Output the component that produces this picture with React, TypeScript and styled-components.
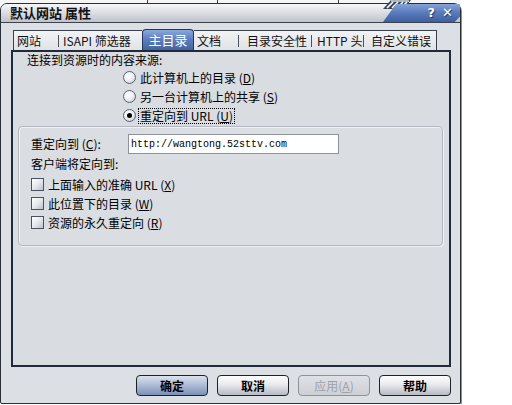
import React from 'react'
import styled, { createGlobalStyle, css } from 'styled-components'

const cjk = `"Noto Sans CJK SC", "Noto Sans", sans-serif`

const GlobalStyle = createGlobalStyle`
  html, body {
    margin: 0;
    padding: 0;
    background: #fff;
  }
  body {
    font-family: ${cjk};
    font-size: 12px;
    color: #000;
  }
`

// bits of other windows peeking above the dialog
const Backdrop = styled.div`
  width: 461px;
  height: 3px;
  background:
    linear-gradient(#3a3a3a, #3a3a3a) 147px 0 / 1px 3px no-repeat,
    linear-gradient(#3a3a3a, #3a3a3a) 217px 0 / 1px 3px no-repeat,
    linear-gradient(#3a3a3a, #3a3a3a) 338px 0 / 1px 3px no-repeat,
    #f6f6f6;
`

const Window = styled.div`
  width: 459px;
  height: 399px;
  border: 1px solid #2b2f36;
  border-radius: 7px 7px 2px 2px;
  background: #dcdfe3;
  display: flex;
  flex-direction: column;
  box-shadow: 1px 1px 0 #8a8e96;
`

const TitleBar = styled.div`
  height: 18px;
  display: flex;
  align-items: center;
  padding-left: 9px;
  border-bottom: 1px solid #3c424c;
  border-radius: 6px 6px 0 0;
  background: linear-gradient(#f7f7f9 0%, #e2e4e8 35%, #bfc3ca 100%);
`

const Title = styled.div`
  flex: 1;
  font-size: 13px;
  font-weight: bold;
  line-height: 18px;
  color: #111;
`

const Caption = styled.div`
  position: relative;
  width: 89px;
  height: 18px;
  align-self: flex-start;
`

const CaptionFill = styled.div`
  height: 18px;
  display: flex;
  align-items: center;
  justify-content: flex-end;
  gap: 7px;
  padding-right: 7px;
  box-sizing: border-box;
  background: linear-gradient(#86a3d6 0%, #5c7dbd 45%, #3e5e9f 100%);
  clip-path: polygon(12px 100%, 25px 0, 100% 0, 100% 70%, 94% 100%);
`

const CaptionGlyph = styled.span`
  color: #fff;
  font-family: "DejaVu Sans", sans-serif;
  font-weight: bold;
  font-size: 13px;
  line-height: 18px;
  text-shadow: 1px 1px 0 #2a3f6a;
`

const Stairs = styled.svg`
  position: absolute;
  left: 8px;
  top: -4px;
  overflow: visible;
`

const Body = styled.div`
  flex: 1;
  display: flex;
  flex-direction: column;
  padding: 5px 9px 7px 10px;
`

const TabRow = styled.div`
  display: flex;
  align-items: flex-end;
  height: 22px;
  margin-left: 2px;
`

const TabStrip = styled.div<{ $edge: 'left' | 'right' }>`
  display: flex;
  align-items: center;
  height: 19px;
  border-top: 1px solid #3a4250;
  background: linear-gradient(#f2f3f5, #e0e2e6);
  ${p =>
    p.$edge === 'left'
      ? css`
          border-left: 1px solid #3a4250;
        `
      : css`
          border-right: 1px solid #3a4250;
        `}
`

const Tab = styled.div<{ $w: number; $pl: number }>`
  width: ${p => p.$w}px;
  padding-left: ${p => p.$pl}px;
  box-sizing: border-box;
  white-space: nowrap;
  font-size: 12px;
  line-height: 19px;
  color: #111;
`

const Sep = styled.div`
  width: 1px;
  height: 12px;
  background: #4c525c;
`

const ActiveTab = styled.div`
  width: 52px;
  height: 21px;
  box-sizing: border-box;
  border: 1px solid #23365c;
  border-bottom: none;
  border-radius: 4px 4px 0 0;
  background: linear-gradient(#8aa8dc 0%, #5d7fc0 45%, #43639f 100%);
  color: #fff;
  font-size: 13px;
  line-height: 20px;
  text-align: center;
`

const Panel = styled.div`
  height: 313px;
  border: 2px solid #1f2b3c;
  background: #d9dce1;
  display: flex;
  flex-direction: column;
`

const Intro = styled.div`
  padding-left: 14px;
  line-height: 16px;
`

const RadioList = styled.div`
  padding-left: 110px;
  display: flex;
  flex-direction: column;
`

const OptionRow = styled.div`
  height: 19px;
  display: flex;
  align-items: center;
  gap: 3px;
  white-space: nowrap;
`

const Radio = styled.span<{ $on?: boolean }>`
  width: 13px;
  height: 13px;
  box-sizing: border-box;
  border: 1px solid #5a6272;
  border-radius: 50%;
  background: radial-gradient(circle at 40% 35%, #ffffff 0%, #eef0f3 45%, #b9bec8 100%);
  display: flex;
  align-items: center;
  justify-content: center;
  &::after {
    content: '';
    width: 5px;
    height: 5px;
    border-radius: 50%;
    background: #000;
    display: ${p => (p.$on ? 'block' : 'none')};
  }
`

const Check = styled.span`
  width: 13px;
  height: 13px;
  box-sizing: border-box;
  border: 1px solid #4a5262;
  background: linear-gradient(135deg, #ffffff 0%, #e6e8ec 50%, #bcc1ca 100%);
`

const Label = styled.span<{ $focus?: boolean }>`
  line-height: 14px;
  padding: 0 1px;
  ${p =>
    p.$focus &&
    css`
      outline: 1px dotted #000;
      outline-offset: 0;
    `}
`

const GroupBox = styled.div`
  height: 111px;
  margin: 1px 6px 0 5px;
  padding: 7px 0 0 12px;
  border: 1px solid #b3b7bf;
  border-radius: 4px;
  background: #dadde1;
  box-shadow: inset 1px 1px 0 #eef0f2, 1px 1px 0 #eef0f2;
`

const FieldRow = styled.div`
  display: flex;
  align-items: center;
  height: 20px;
`

const FieldLabel = styled.span`
  width: 97px;
  line-height: 16px;
`

const UrlInput = styled.input`
  width: 211px;
  height: 20px;
  box-sizing: border-box;
  margin: 0;
  padding: 0 0 0 2px;
  border: 1px solid #8e929a;
  background: #fff;
  font-family: "Liberation Mono", monospace;
  font-size: 10px;
  color: #000;
  outline: none;
`

const SubLabel = styled.div`
  margin-top: 2px;
  line-height: 16px;
`

const CheckList = styled.div`
  margin-top: 3px;
  display: flex;
  flex-direction: column;
`

const ButtonRow = styled.div`
  margin-top: 8px;
  display: flex;
  justify-content: flex-end;
  gap: 9px;
`

const Button = styled.button<{ $variant?: 'default' | 'disabled' }>`
  width: 72px;
  height: 21px;
  padding: 0;
  border: 1px solid #1e2228;
  border-radius: 4px;
  background: linear-gradient(#fdfdfe 0%, #e8eaee 45%, #b6bac3 100%);
  font-family: ${cjk};
  font-size: 12px;
  font-weight: bold;
  color: #000;
  ${p =>
    p.$variant === 'default' &&
    css`
      background: linear-gradient(#dbe2ee 0%, #b0bed6 45%, #7b90b8 100%);
    `}
  ${p =>
    p.$variant === 'disabled' &&
    css`
      border-color: #8e929a;
      background: linear-gradient(#dfe1e5, #cdd0d6);
      color: #9ea2aa;
      font-weight: normal;
    `}
`

export default function App() {
  return (
    <>
      <GlobalStyle />
      <Backdrop />
      <Window>
        <TitleBar>
          <Title>默认网站 属性</Title>
          <Caption>
            <Stairs width="32" height="9" viewBox="0 0 32 9">
              <polygon points="4,9 12,0 32,0 26,7 14,9" fill="#3a4658" />
              <path d="M8 8 L14 2 M13 8 L19 2 M18 8 L24 2 M23 7 L28 2" stroke="#fff" strokeWidth="1.6" />
              <path d="M12 1 L30 1" stroke="#fff" strokeWidth="1.2" />
            </Stairs>
            <CaptionFill>
              <CaptionGlyph>?</CaptionGlyph>
              <CaptionGlyph>✕</CaptionGlyph>
            </CaptionFill>
          </Caption>
        </TitleBar>
        <Body>
          <TabRow>
            <TabStrip $edge="left">
              <Tab $w={44} $pl={3}>网站</Tab>
              <Sep />
              <Tab $w={83} $pl={4}>ISAPI 筛选器</Tab>
            </TabStrip>
            <ActiveTab>主目录</ActiveTab>
            <TabStrip $edge="right">
              <Tab $w={44} $pl={3}>文档</Tab>
              <Sep />
              <Tab $w={72} $pl={8}>目录安全性</Tab>
              <Sep />
              <Tab $w={51} $pl={5}>HTTP 头</Tab>
              <Sep />
              <Tab $w={72} $pl={7}>自定义错误</Tab>
            </TabStrip>
          </TabRow>
          <Panel>
            <Intro>连接到资源时的内容来源:</Intro>
            <RadioList>
              <OptionRow>
                <Radio />
                <Label>此计算机上的目录 (<u>D</u>)</Label>
              </OptionRow>
              <OptionRow>
                <Radio />
                <Label>另一台计算机上的共享 (<u>S</u>)</Label>
              </OptionRow>
              <OptionRow>
                <Radio $on />
                <Label $focus>重定向到 URL (<u>U</u>)</Label>
              </OptionRow>
            </RadioList>
            <GroupBox>
              <FieldRow>
                <FieldLabel>重定向到 (<u>C</u>):</FieldLabel>
                <UrlInput readOnly value="http://wangtong.52sttv.com" />
              </FieldRow>
              <SubLabel>客户端将定向到:</SubLabel>
              <CheckList>
                <OptionRow>
                  <Check />
                  <Label>上面输入的准确 URL (<u>X</u>)</Label>
                </OptionRow>
                <OptionRow>
                  <Check />
                  <Label>此位置下的目录 (<u>W</u>)</Label>
                </OptionRow>
                <OptionRow>
                  <Check />
                  <Label>资源的永久重定向 (<u>R</u>)</Label>
                </OptionRow>
              </CheckList>
            </GroupBox>
          </Panel>
          <ButtonRow>
            <Button $variant="default">确定</Button>
            <Button>取消</Button>
            <Button $variant="disabled">应用(<u>A</u>)</Button>
            <Button>帮助</Button>
          </ButtonRow>
        </Body>
      </Window>
    </>
  )
}
